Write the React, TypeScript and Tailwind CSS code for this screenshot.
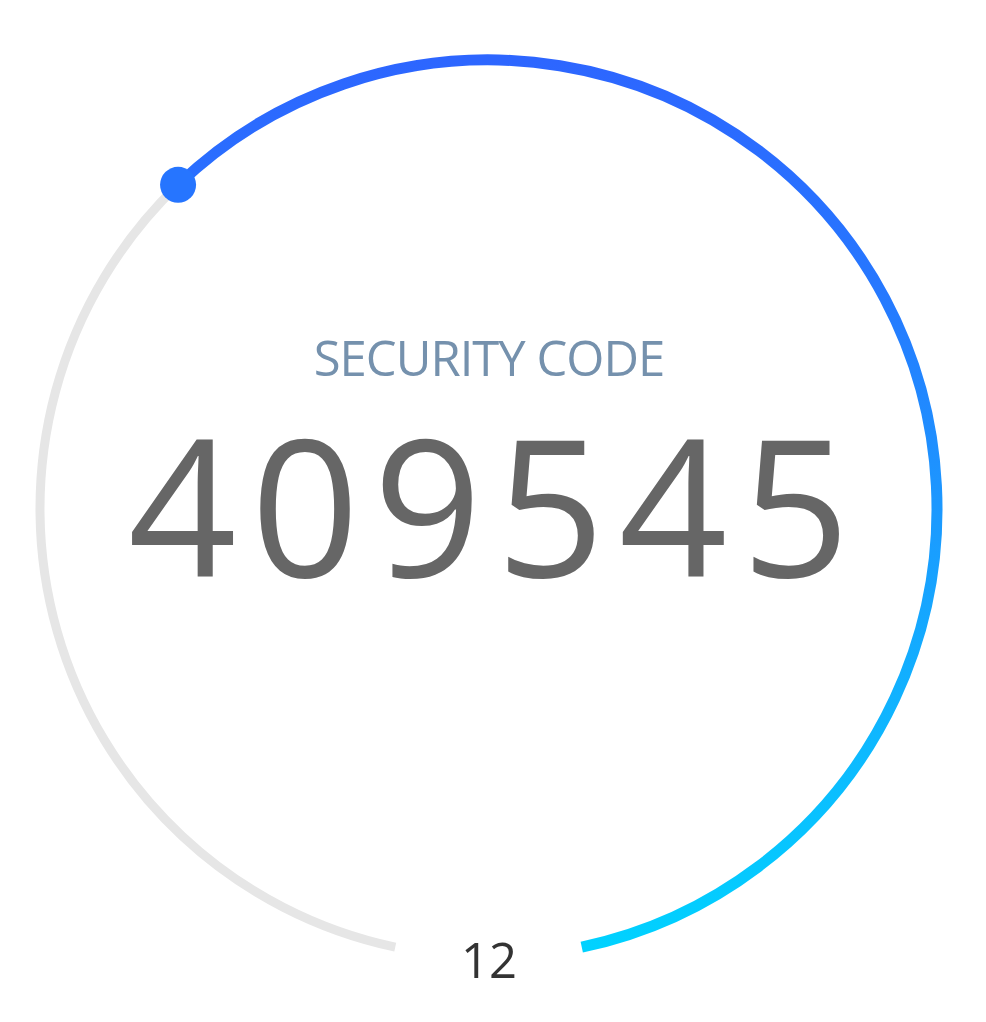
import React from "react";

const CX = 488.5;
const CY = 508.5;
const R = 448.5;

function pt(deg: number) {
  const t = (deg * Math.PI) / 180;
  return { x: CX + R * Math.sin(t), y: CY - R * Math.cos(t) };
}

function arc(a0: number, a1: number) {
  const p0 = pt(a0);
  const p1 = pt(a1);
  const large = a1 - a0 > 180 ? 1 : 0;
  return `M ${p0.x.toFixed(2)} ${p0.y.toFixed(2)} A ${R} ${R} 0 ${large} 1 ${p1.x.toFixed(2)} ${p1.y.toFixed(2)}`;
}

export default function App() {
  const startGray = 192;
  const knob = 316.2;
  const endBlue = 168 + 360;
  const k = pt(knob);
  return (
    <div className="relative w-[986px] h-[1022px] bg-white overflow-hidden">
      <svg
        className="absolute inset-0"
        width={986}
        height={1022}
        viewBox="0 0 986 1022"
      >
        <defs>
          <linearGradient
            id="g"
            gradientUnits="userSpaceOnUse"
            x1="0"
            y1="60"
            x2="0"
            y2="950"
          >
            <stop offset="0" stopColor="#2d66ff" />
            <stop offset="0.25" stopColor="#2677ff" />
            <stop offset="0.5" stopColor="#1c98ff" />
            <stop offset="0.8" stopColor="#0cbcff" />
            <stop offset="1" stopColor="#00d2ff" />
          </linearGradient>
        </defs>
        <path d={arc(startGray, knob)} fill="none" stroke="#e6e6e6" strokeWidth={9} />
        <path d={arc(knob, endBlue)} fill="none" stroke="url(#g)" strokeWidth={11} />
        <circle cx={k.x} cy={k.y} r={18} fill="#2675ff" />
      </svg>
      <div className="relative flex flex-col items-center pt-[333px] pr-[8px]">
        <div className="text-[49px] leading-none text-[#7591ad] font-['Open_Sans',sans-serif] tracking-[-1px]">
          SECURITY CODE
        </div>
        <div className="mt-[27px] text-[190px] leading-none text-[#666666] font-['Open_Sans',sans-serif] tracking-[14px] pl-[14px]">
          409545
        </div>
        <div className="mt-[336px] text-[49px] leading-none text-[#333333] font-['Open_Sans',sans-serif]">
          12
        </div>
      </div>
    </div>
  );
}
